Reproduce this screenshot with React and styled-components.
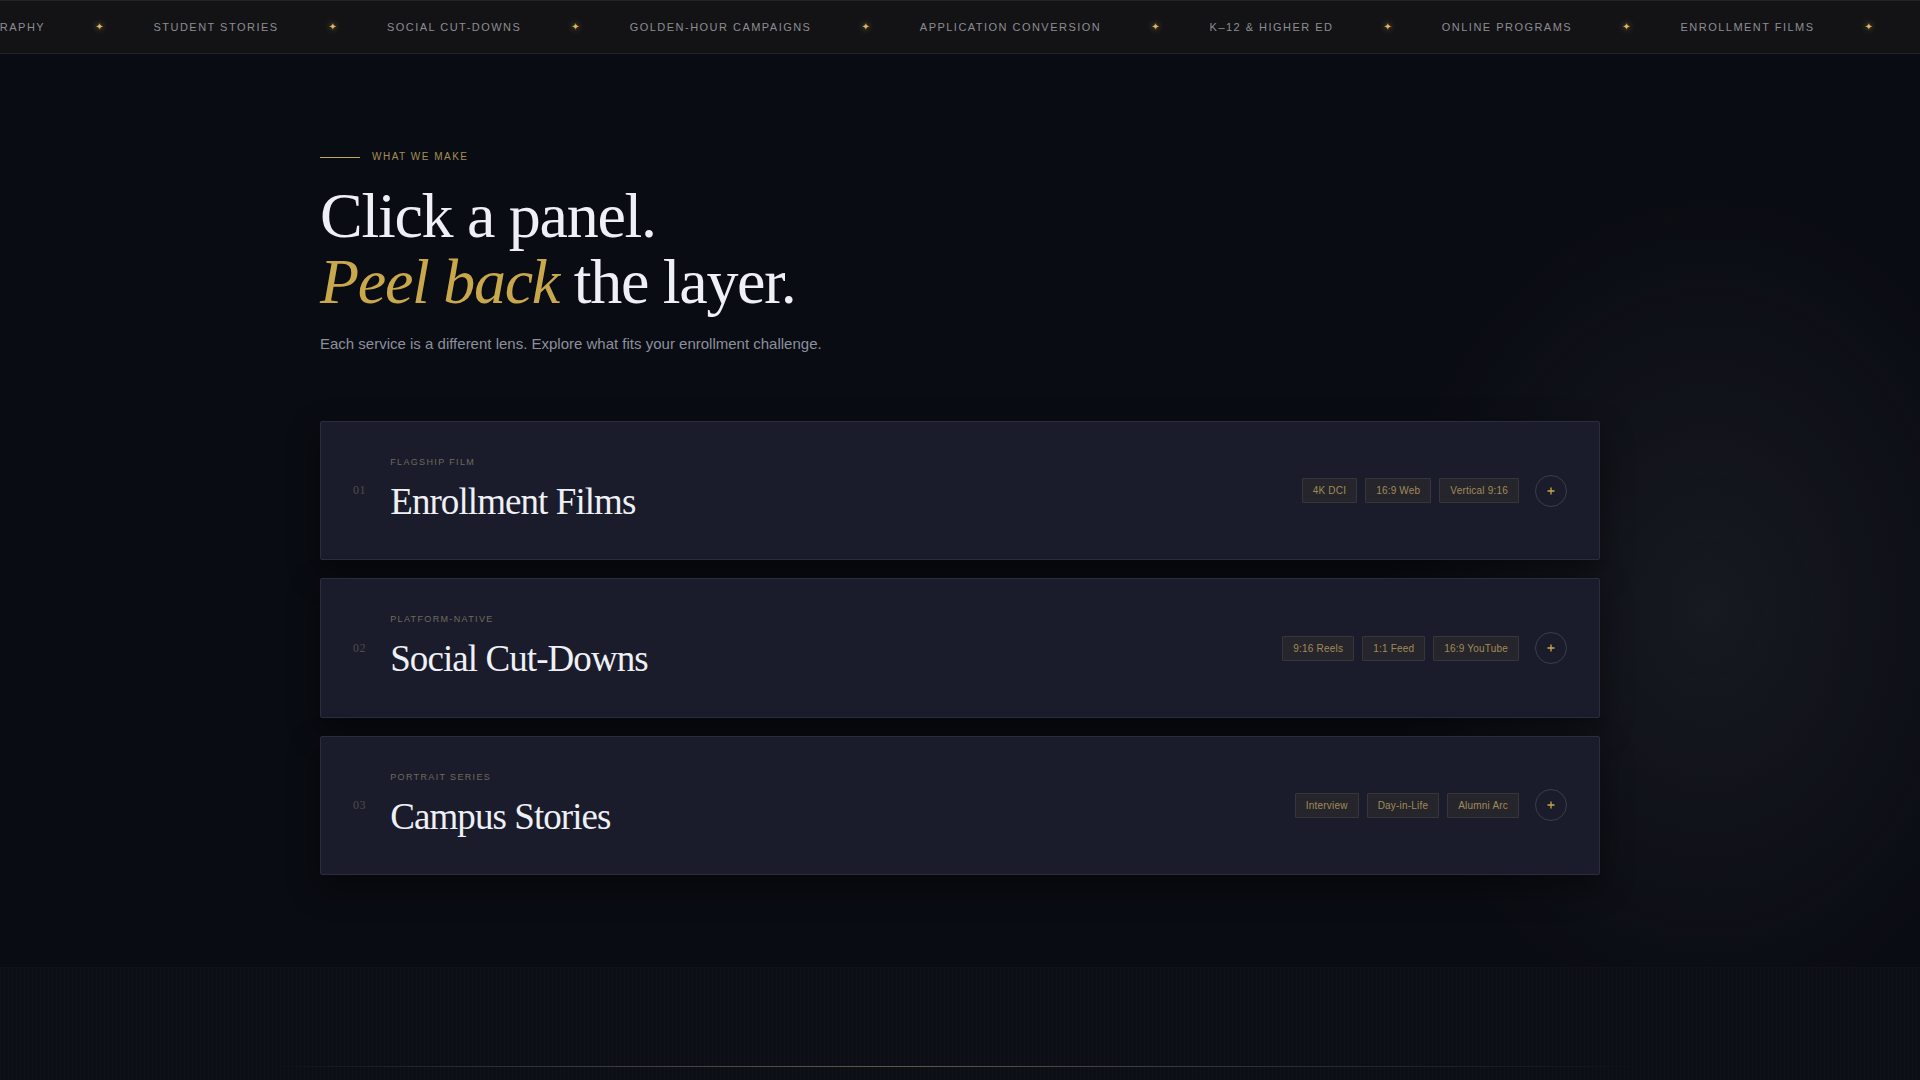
import { styled, createGlobalStyle } from "styled-components";

const GlobalStyle = createGlobalStyle`
    html, body {
        margin: 0;
        padding: 0;
        background: #0a0c13;
    }
    body {
        font-family: "Liberation Sans", Arial, sans-serif;
        color: #eef0f5;
        -webkit-font-smoothing: antialiased;
    }
    * {
        box-sizing: border-box;
    }
`;

const Page = styled.div`
    min-height: 100vh;
    overflow: hidden;
    background:
        radial-gradient(ellipse 320px 420px at 89% 55%, rgba(34, 36, 44, 0.55), rgba(10, 12, 19, 0) 100%),
        #0a0c13;
`;

const Ticker = styled.div`
    height: 54px;
    background: #131316;
    border-top: 1px solid #232326;
    border-bottom: 1px solid #242428;
    display: flex;
    align-items: center;
    overflow: hidden;
`;

const TickerTrack = styled.div`
    display: flex;
    align-items: center;
    gap: 50px;
    white-space: nowrap;
    transform: translateX(-79px);
`;

const TickerItem = styled.span`
    font-size: 11px;
    letter-spacing: 0.134em;
    text-transform: uppercase;
    color: #8d8d92;
    line-height: 1;
`;

const TickerStar = styled.span`
    font-family: "DejaVu Sans", sans-serif;
    font-size: 10px;
    color: #dcb95e;
    text-shadow: 0 0 6px rgba(220, 185, 94, 0.75);
    line-height: 1;
`;

const Section = styled.section`
    max-width: 1280px;
    margin: 0 auto;
    padding: 96px 0 92px;
`;

const Eyebrow = styled.div`
    display: flex;
    align-items: center;
    gap: 12px;
    height: 14px;
    margin-bottom: 19px;
`;

const EyebrowLine = styled.span`
    width: 40px;
    height: 1px;
    background: #c9a84c;
`;

const EyebrowText = styled.span`
    font-size: 10px;
    line-height: 14px;
    letter-spacing: 0.15em;
    text-transform: uppercase;
    color: #a48e58;
`;

const Heading = styled.h1`
    margin: 0;
    font-family: "Liberation Serif", "Times New Roman", serif;
    font-weight: 400;
    font-size: 64px;
    line-height: 66px;
    letter-spacing: -0.02em;
    color: #eef0f5;
    em {
        color: #c9a84c;
        font-style: italic;
    }
`;

const Lede = styled.p`
    margin: 17px 0 0;
    font-size: 15px;
    line-height: 24px;
    color: #8c909c;
`;

const PanelList = styled.div`
    display: flex;
    flex-direction: column;
    gap: 18px;
    margin-top: 65px;
`;

const Panel = styled.article`
    background: #1a1c2b;
    border: 1px solid #2a2d3b;
    border-radius: 2px;
    box-shadow: 0 12px 32px rgba(0, 0, 0, 0.45);
    cursor: pointer;
`;

const PanelHead = styled.div`
    display: flex;
    align-items: center;
    gap: 24px;
    padding: 33px 32px;
`;

const PanelNum = styled.span`
    font-family: "Liberation Serif", "Times New Roman", serif;
    font-size: 12px;
    letter-spacing: 0.05em;
    color: #4f4c49;
`;

const PanelInfo = styled.div`
    flex: 1;
    display: flex;
    flex-direction: column;
    gap: 11px;
    padding-top: 1px;
    padding-bottom: 2px;
`;

const PanelKicker = styled.span`
    font-size: 9px;
    line-height: 13px;
    letter-spacing: 0.15em;
    text-transform: uppercase;
    color: #706a5e;
`;

const PanelTitle = styled.h2`
    margin: 0;
    font-family: "Liberation Serif", "Times New Roman", serif;
    font-weight: 400;
    font-size: 37px;
    line-height: 1.2;
    letter-spacing: -0.025em;
    color: #eef0f5;
`;

const PanelMeta = styled.div`
    display: flex;
    align-items: center;
    gap: 16px;
`;

const TagRow = styled.div`
    display: flex;
    gap: 8px;
`;

const Tag = styled.span`
    font-size: 10px;
    line-height: 23px;
    letter-spacing: 0.02em;
    padding: 0 10px;
    color: #a08b5a;
    background: #25252b;
    border: 1px solid #35353b;
    border-radius: 1px;
`;

const ToggleButton = styled.button`
    width: 32px;
    height: 32px;
    border-radius: 50%;
    border: 1px solid #3b3d4a;
    background: transparent;
    display: flex;
    align-items: center;
    justify-content: center;
    padding: 0;
    cursor: pointer;
    svg {
        width: 8px;
        height: 8px;
    }
`;

const FooterBand = styled.div`
    padding-top: 98px;
    height: 140px;
    border-top: 1px solid rgba(255, 255, 255, 0.015);
    background:
        repeating-linear-gradient(90deg, rgba(255, 255, 255, 0.012) 0 1px, rgba(0, 0, 0, 0) 1px 4px),
        repeating-linear-gradient(0deg, rgba(0, 0, 0, 0.08) 0 1px, rgba(0, 0, 0, 0) 1px 3px),
        #0d0f17;
`;

const Divider = styled.div`
    width: 72%;
    height: 1px;
    margin: 0 auto;
    background: linear-gradient(90deg,
        rgba(255, 255, 255, 0) 0%,
        rgba(255, 255, 255, 0.12) 15%,
        rgba(220, 200, 150, 0.4) 45%,
        rgba(255, 255, 255, 0.14) 70%,
        rgba(255, 255, 255, 0) 100%);
`;

const tickerItems = [
    "Cinematography",
    "Student Stories",
    "Social Cut-Downs",
    "Golden-Hour Campaigns",
    "Application Conversion",
    "K–12 & Higher Ed",
    "Online Programs",
    "Enrollment Films",
    "Campus Tours",
];

const services = [
    {
        num: "01",
        kicker: "Flagship Film",
        title: "Enrollment Films",
        tags: ["4K DCI", "16:9 Web", "Vertical 9:16"],
    },
    {
        num: "02",
        kicker: "Platform-Native",
        title: "Social Cut-Downs",
        tags: ["9:16 Reels", "1:1 Feed", "16:9 YouTube"],
    },
    {
        num: "03",
        kicker: "Portrait Series",
        title: "Campus Stories",
        tags: ["Interview", "Day-in-Life", "Alumni Arc"],
    },
];

function PlusIcon() {
    return (
        <svg viewBox="0 0 8 8" fill="none">
            <path d="M4 0.5v7M0.5 4h7" stroke="#c9a84c" strokeWidth="1.3" />
        </svg>
    );
}

export default function App() {
    return (
        <Page>
            <GlobalStyle />
            <Ticker>
                <TickerTrack>
                    {tickerItems.flatMap((item, i) => [
                        <TickerItem key={"t" + i}>{item}</TickerItem>,
                        <TickerStar key={"s" + i}>✦</TickerStar>,
                    ])}
                </TickerTrack>
            </Ticker>

            <Section>
                <Eyebrow>
                    <EyebrowLine />
                    <EyebrowText>What we make</EyebrowText>
                </Eyebrow>
                <Heading>
                    Click a panel.
                    <br />
                    <em>Peel back</em> the layer.
                </Heading>
                <Lede>Each service is a different lens. Explore what fits your enrollment challenge.</Lede>

                <PanelList>
                    {services.map((s) => (
                        <Panel key={s.num}>
                            <PanelHead>
                                <PanelNum>{s.num}</PanelNum>
                                <PanelInfo>
                                    <PanelKicker>{s.kicker}</PanelKicker>
                                    <PanelTitle>{s.title}</PanelTitle>
                                </PanelInfo>
                                <PanelMeta>
                                    <TagRow>
                                        {s.tags.map((t) => (
                                            <Tag key={t}>{t}</Tag>
                                        ))}
                                    </TagRow>
                                    <ToggleButton aria-label="Expand">
                                        <PlusIcon />
                                    </ToggleButton>
                                </PanelMeta>
                            </PanelHead>
                        </Panel>
                    ))}
                </PanelList>
            </Section>

            <FooterBand>
                <Divider />
            </FooterBand>
        </Page>
    );
}
